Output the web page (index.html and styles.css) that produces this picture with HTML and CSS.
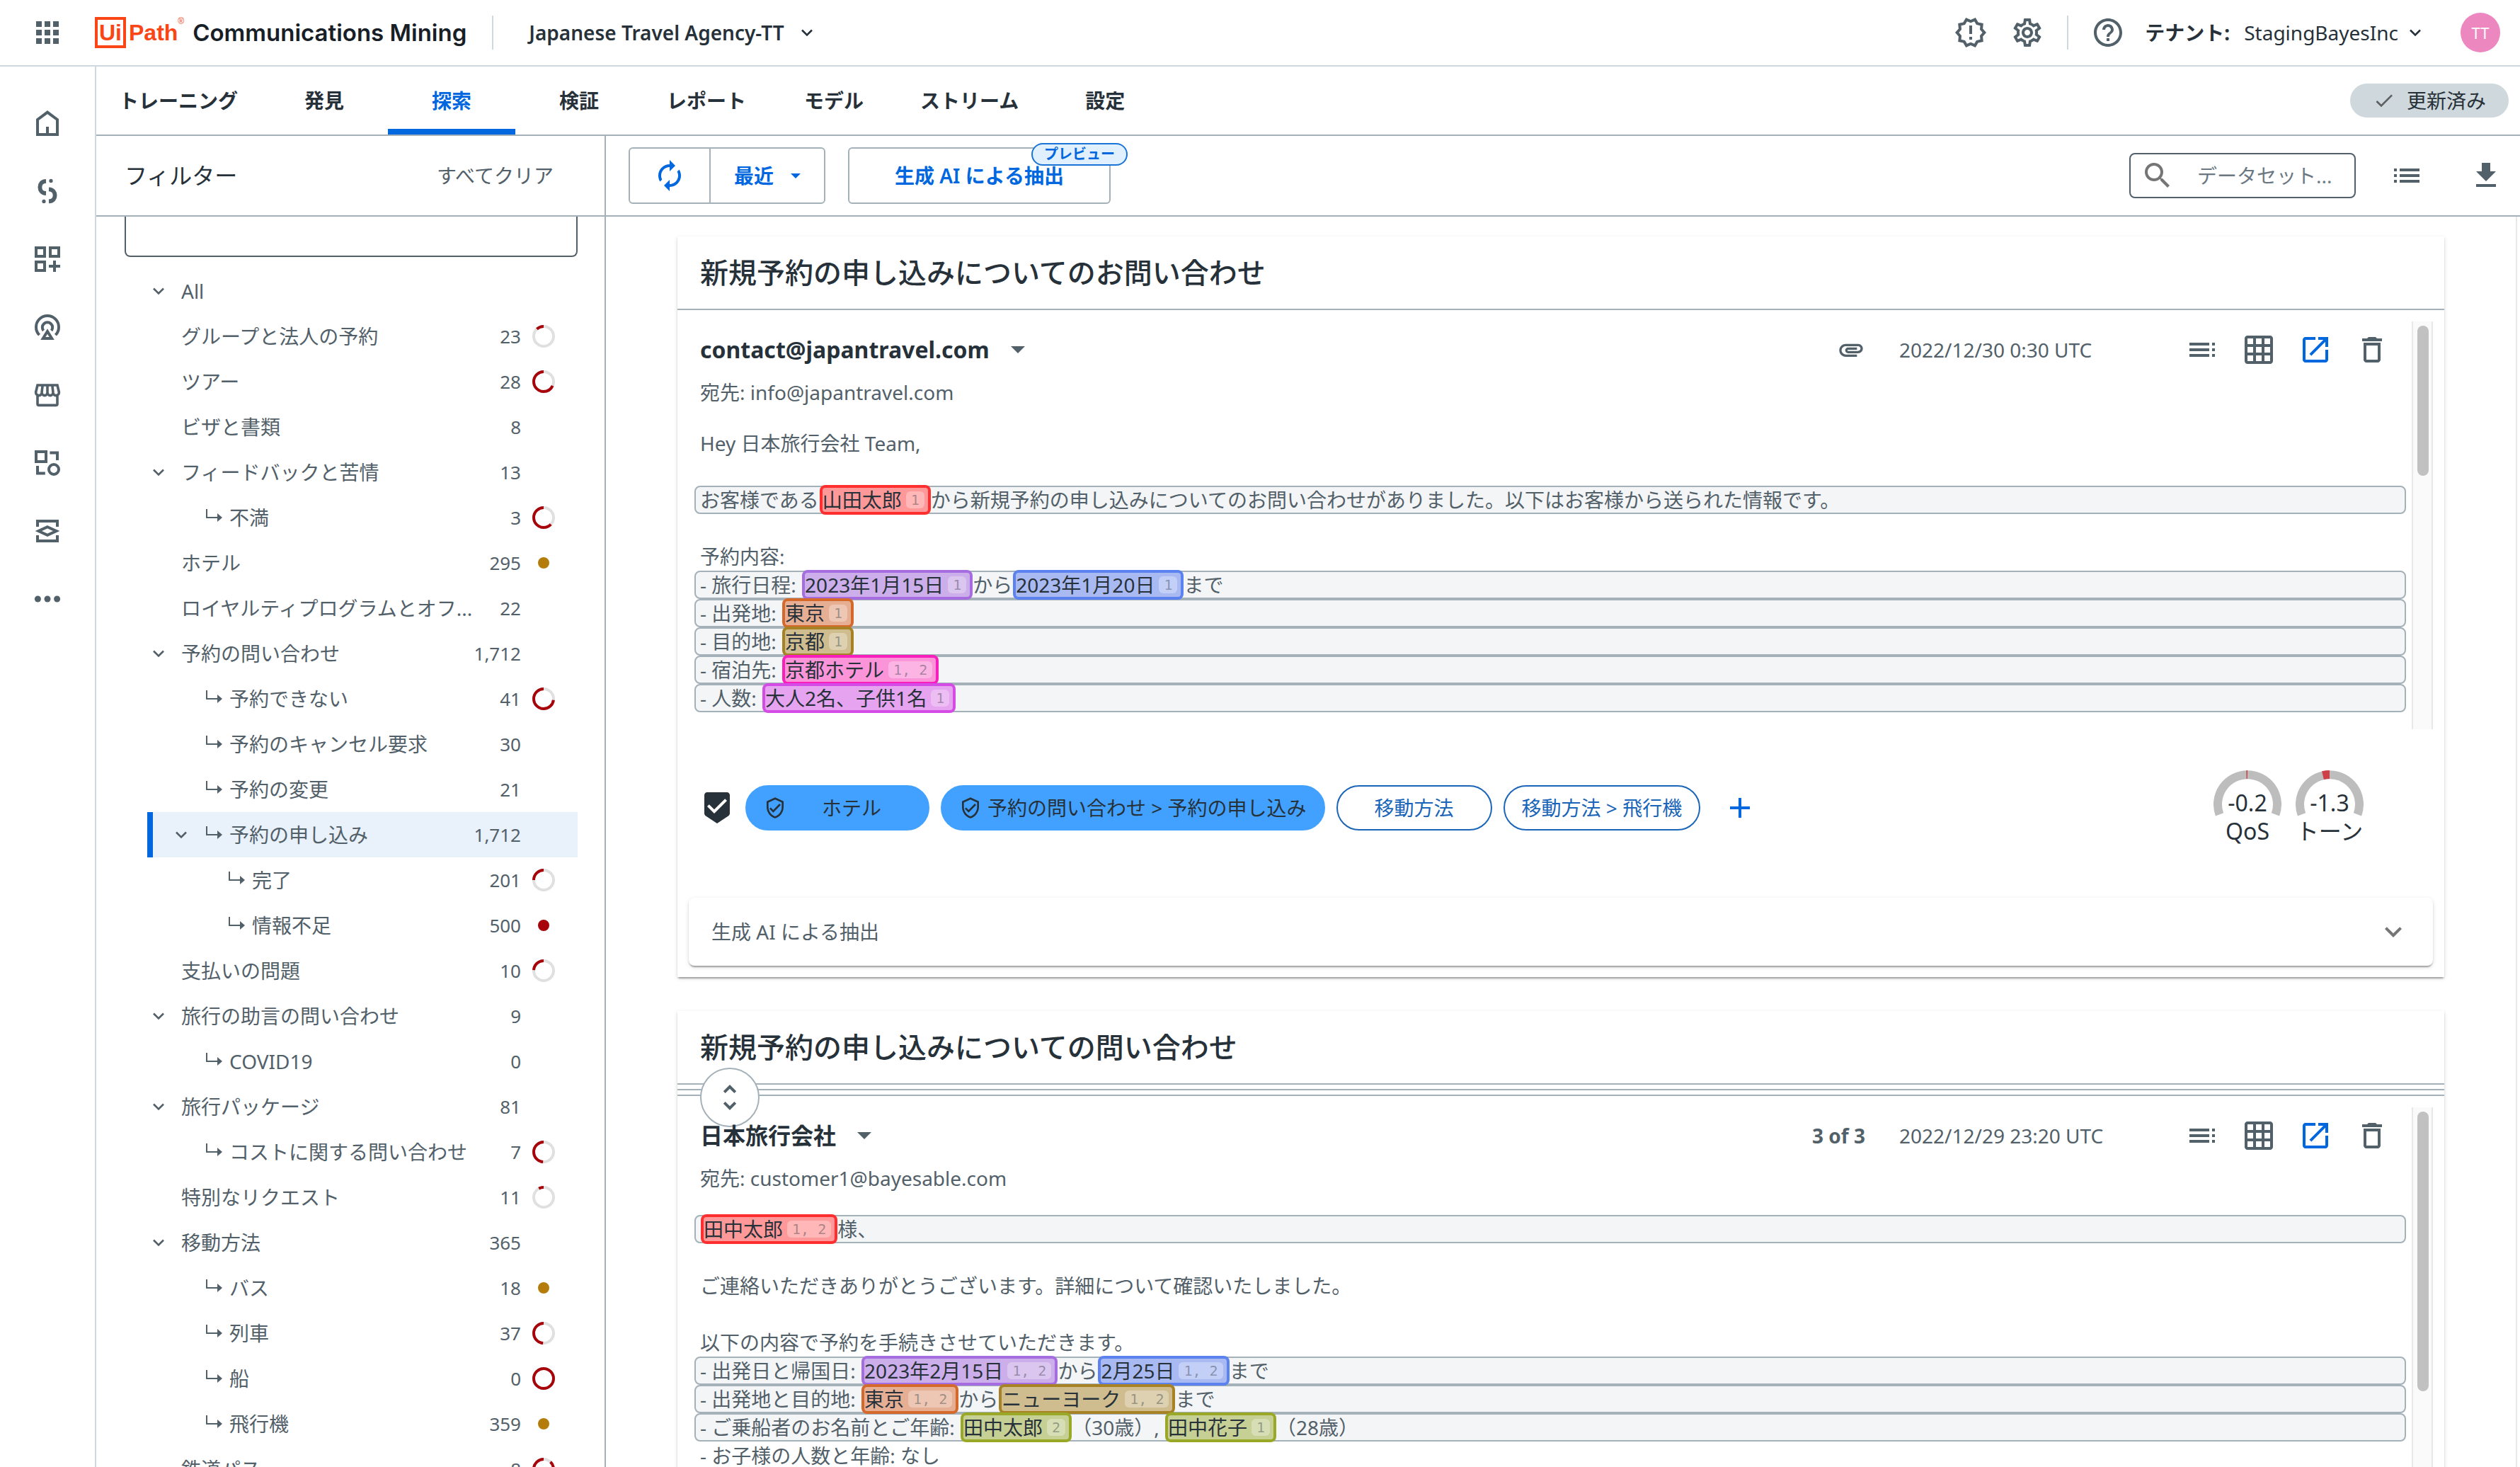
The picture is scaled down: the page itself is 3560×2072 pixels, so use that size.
FILE: index.html
```html
<!DOCTYPE html>
<html lang="ja">
<head>
<meta charset="utf-8">
<title>UiPath Communications Mining</title>
<link rel="stylesheet" href="styles.css">
</head>
<body>
<svg class="sprite" aria-hidden="true">
  <symbol id="i-chevron" viewBox="0 0 24 24"><path d="M6 9l6 6 6-6" fill="none" stroke="currentColor" stroke-width="2.200"/></symbol>
  <symbol id="i-caret" viewBox="0 0 20 10"><path d="M0 0h20L10 10z"/></symbol>
  <symbol id="i-sub" viewBox="0 0 28 28"><path d="M4 2v12h17" fill="none" stroke="currentColor" stroke-width="2"/><path d="M19 8l7 6-7 6z"/></symbol>
  <symbol id="i-toc" viewBox="0 0 24 24"><path d="M3 9h14V7H3v2zm0 4h14v-2H3v2zm0 4h14v-2H3v2zm16 0h2v-2h-2v2zm0-10v2h2V7h-2zm0 6h2v-2h-2v2z"/></symbol>
  <symbol id="i-grid" viewBox="0 0 24 24"><path d="M20 2H4c-1.100 0-2 .9-2 2v16c0 1.100.9 2 2 2h16c1.100 0 2-.9 2-2V4c0-1.100-.9-2-2-2zM8 20H4v-4h4v4zm0-6H4v-4h4v4zm0-6H4V4h4v4zm6 12h-4v-4h4v4zm0-6h-4v-4h4v4zm0-6h-4V4h4v4zm6 12h-4v-4h4v4zm0-6h-4v-4h4v4zm0-6h-4V4h4v4z"/></symbol>
  <symbol id="i-open" viewBox="0 0 24 24"><path d="M19 19H5V5h7V3H5c-1.110 0-2 .9-2 2v14c0 1.100.89 2 2 2h14c1.100 0 2-.9 2-2v-7h-2v7zM14 3v2h3.590l-9.830 9.830 1.410 1.410L19 6.410V10h2V3h-7z"/></symbol>
  <symbol id="i-trash" viewBox="0 0 24 24"><path d="M6 19c0 1.100.9 2 2 2h8c1.100 0 2-.9 2-2V7H6v12zM8 9h8v10H8V9zm7.500-5l-1-1h-5l-1 1H5v2h14V4h-3.500z"/></symbol>
  <symbol id="i-shield" viewBox="0 0 24 24"><path d="M12 1L3 5v6c0 5.550 3.840 10.740 9 12 5.160-1.260 9-6.450 9-12V5l-9-4zm7 10c0 4.520-2.980 8.690-7 9.930-4.020-1.240-7-5.410-7-9.930V6.300l7-3.110 7 3.110V11zm-11.590.590L6 13l4 4 8-8-1.410-1.420L10 14.170z"/></symbol>
</svg>

<header class="topbar">
  <button class="icon-btn apps" aria-label="アプリ"><svg class="icon" viewBox="0 0 24 24"><path d="M4 8h4V4H4v4zm6 12h4v-4h-4v4zm-6 0h4v-4H4v4zm0-6h4v-4H4v4zm6 0h4v-4h-4v4zm6-10v4h4V4h-4zm-6 4h4V4h-4v4zm6 6h4v-4h-4v4zm0 6h4v-4h-4v4z"/></svg></button>
  <a class="brand" href="#"><span class="logo"><span class="logo-box">Ui</span><span class="logo-path">Path</span><sup class="logo-mark">®</sup></span><span class="product">Communications Mining</span></a>
  <span class="rule"></span>
  <button class="project">Japanese Travel Agency-TT <svg class="chev"><use href="#i-chevron"/></svg></button>
  <div class="top-actions">
    <button class="icon-btn" aria-label="お知らせ"><svg class="icon" viewBox="0 0 24 24"><path d="M23 12l-2.440-2.780.34-3.680-3.610-.82-1.890-3.180L12 3 8.600 1.540 6.710 4.720l-3.610.81.34 3.680L1 12l2.440 2.780-.34 3.690 3.610.82 1.890 3.180L12 21l3.400 1.460 1.890-3.180 3.610-.82-.34-3.680L23 12zm-4.510 2.110l.26 2.790-2.740.62-1.430 2.410L12 18.820l-2.580 1.110-1.430-2.410-2.740-.62.26-2.800L3.660 12l1.850-2.120-.26-2.780 2.740-.61 1.430-2.410L12 5.180l2.580-1.110 1.430 2.410 2.740.62-.26 2.790L20.340 12l-1.850 2.110zM11 15h2v2h-2zm0-8h2v6h-2z"/></svg></button>
    <button class="icon-btn" aria-label="設定"><svg class="icon" viewBox="0 0 24 24"><path d="M19.430 12.980c.04-.32.07-.64.07-.98 0-.34-.03-.66-.07-.98l2.110-1.650c.19-.15.24-.42.12-.64l-2-3.460c-.09-.16-.26-.25-.44-.25-.06 0-.12.01-.17.03l-2.490 1c-.52-.4-1.080-.73-1.690-.98l-.38-2.650C14.460 2.180 14.250 2 14 2h-4c-.25 0-.46.18-.49.42l-.38 2.650c-.61.25-1.170.59-1.690.98l-2.490-1c-.06-.02-.12-.03-.18-.03-.17 0-.34.09-.43.25l-2 3.460c-.13.22-.07.49.12.64l2.110 1.650c-.04.32-.07.65-.07.98 0 .33.03.66.07.98l-2.110 1.650c-.19.15-.24.42-.12.64l2 3.460c.09.16.26.25.44.25.06 0 .12-.01.17-.03l2.490-1c.52.4 1.080.73 1.690.98l.38 2.650c.03.24.24.42.49.42h4c.25 0 .46-.18.49-.42l.38-2.650c.61-.25 1.170-.59 1.690-.98l2.490 1c.06.02.12.03.18.03.17 0 .34-.09.43-.25l2-3.460c.12-.22.07-.49-.12-.64l-2.110-1.650zm-1.980-1.710c.04.31.05.52.05.73 0 .21-.02.43-.05.73l-.14 1.130.89.7 1.080.84-.7 1.210-1.270-.51-1.040-.42-.9.680c-.43.32-.84.56-1.250.73l-1.060.43-.16 1.130-.2 1.350h-1.400l-.19-1.350-.16-1.130-1.060-.43c-.43-.18-.83-.41-1.230-.71l-.91-.7-1.060.43-1.270.51-.7-1.210 1.080-.84.89-.7-.14-1.130c-.03-.31-.05-.54-.05-.74s.02-.43.05-.73l.14-1.130-.89-.7-1.080-.84.7-1.210 1.270.51 1.040.42.9-.68c.43-.32.84-.56 1.250-.73l1.060-.43.16-1.130.2-1.350h1.390l.19 1.350.16 1.130 1.060.43c.43.18.83.41 1.230.71l.91.7 1.060-.43 1.270-.51.7 1.210-1.070.85-.89.7.14 1.130zM12 8c-2.210 0-4 1.790-4 4s1.790 4 4 4 4-1.790 4-4-1.790-4-4-4zm0 6c-1.100 0-2-.9-2-2s.9-2 2-2 2 .9 2 2-.9 2-2 2z"/></svg></button>
    <span class="rule"></span>
    <button class="icon-btn" aria-label="ヘルプ"><svg class="icon" viewBox="0 0 24 24"><path d="M11 18h2v-2h-2v2zm1-16C6.480 2 2 6.480 2 12s4.480 10 10 10 10-4.480 10-10S17.520 2 12 2zm0 18c-4.410 0-8-3.590-8-8s3.590-8 8-8 8 3.590 8 8-3.590 8-8 8zm0-14c-2.210 0-4 1.790-4 4h2c0-1.100.9-2 2-2s2 .9 2 2c0 2-3 1.750-3 5h2c0-2.250 3-2.500 3-5 0-2.210-1.790-4-4-4z"/></svg></button>
    <button class="tenant"><b>テナント:</b><span>StagingBayesInc</span><svg class="chev"><use href="#i-chevron"/></svg></button>
    <button class="avatar">TT</button>
  </div>
</header>

<div class="shell">
  <nav class="rail" aria-label="メイン">
    <a href="#" aria-label="ホーム"><svg class="icon line" viewBox="0 0 24 24"><path d="M5 9.500V20h14V9.500L12 4.300z M12 14.500V20"/></svg></a>
    <a href="#" aria-label="フロー"><svg class="icon line" viewBox="0 0 24 24"><path stroke-width="2.900" d="M11 4.900C8 5 6.700 7 6.700 9.200S8 13.400 11 13.500M13 10.700c3 .1 4.300 2.200 4.300 4.300S16 19.100 13 19.200"/><circle class="dot" cx="14.500" cy="4.700" r="1.300"/><circle class="dot" cx="9.500" cy="19.200" r="1.300"/></svg></a>
    <a href="#" aria-label="アプリ追加"><svg class="icon line" viewBox="0 0 24 24"><path d="M4 4h6v6H4zM14 4h6v6h-6zM4 14h6v6H4zM17 13v8M13 17h8"/></svg></a>
    <a href="#" aria-label="発信"><svg class="icon line" viewBox="0 0 24 24"><path d="M6.300 17.600A8 8 0 1 1 17.700 17.600M9.200 14.500A3.600 3.600 0 1 1 14.800 14.500M12 15l-3.100 5h6.200z"/></svg></a>
    <a href="#" aria-label="マーケットプレース"><svg class="icon line" viewBox="0 0 24 24"><path stroke-width="1.800" d="M5 5h14l1.200 5c0 1.400-1 2.300-2.200 2.300s-2-1-2-2.200c0 1.200-1 2.200-2 2.200s-2-1-2-2.200c0 1.200-1 2.200-2 2.200s-2-1-2-2.200c0 1.200-.8 2.200-2 2.200s-2.200-.9-2.200-2.300zM8.600 5L8 10.100M12 5v5.100M15.400 5l.6 5.100M5 12.300v5.900a1 1 0 0 0 1 1h12a1 1 0 0 0 1-1v-5.900"/></svg></a>
    <a href="#" aria-label="コンポーネント"><svg class="icon line" viewBox="0 0 24 24"><path d="M4 4h7v7H4zM13.700 4.800H19V10M5 14v5.200h5.400"/><circle cx="16.500" cy="16.500" r="3.500"/></svg></a>
    <a href="#" aria-label="モニタリング"><svg class="icon line" viewBox="0 0 24 24"><path d="M5 9V5h14v4M5 15v4h14v-4M12 9.100l6.300 2.900-6.300 2.900L5.700 12z"/></svg></a>
    <a href="#" aria-label="その他"><svg class="icon" viewBox="0 0 24 24"><circle cx="5.200" cy="12" r="2.250"/><circle cx="12" cy="12" r="2.250"/><circle cx="18.800" cy="12" r="2.250"/></svg></a>
  </nav>

  <div class="workspace">
    <div class="tabbar">
      <nav class="tabs" aria-label="データセット">
        <a href="#">トレーニング</a><a href="#">発見</a><a href="#" class="active" aria-current="page">探索</a><a href="#">検証</a><a href="#">レポート</a><a href="#">モデル</a><a href="#">ストリーム</a><a href="#">設定</a>
      </nav>
      <span class="status"><svg class="icon-sm" viewBox="0 0 24 24"><path d="M9 16.170L4.830 12l-1.420 1.410L9 19 21 7l-1.410-1.410z"/></svg>更新済み</span>
    </div>

    <div class="panes">
      <aside class="filters">
        <div class="filters-head"><h2>フィルター</h2><button>すべてクリア</button></div>
        <div class="filters-body">
          <input class="filter-input" type="text" aria-label="ラベルを検索">
          <ul class="tree">
            <li><button class="toggle" aria-label="折りたたむ"><svg class="chev"><use href="#i-chevron"/></svg></button><span class="name">All</span></li>
            <li class="leaf"><span class="name">グループと法人の予約</span><span class="count">23</span><svg class="ring" viewBox="0 0 32 32"><circle cx="16" cy="16" r="14"/><circle class="arc" pathLength="100" stroke-dasharray="12 88" cx="16" cy="16" r="14"/></svg></li>
            <li class="leaf"><span class="name">ツアー</span><span class="count">28</span><svg class="ring" viewBox="0 0 32 32"><circle cx="16" cy="16" r="14"/><circle class="arc" pathLength="100" stroke-dasharray="68 32" cx="16" cy="16" r="14"/></svg></li>
            <li class="leaf"><span class="name">ビザと書類</span><span class="count">8</span><span class="ring"></span></li>
            <li><button class="toggle" aria-label="折りたたむ"><svg class="chev"><use href="#i-chevron"/></svg></button><span class="name">フィードバックと苦情</span><span class="count">13</span><span class="ring"></span></li>
            <li class="leaf l1"><svg class="sub"><use href="#i-sub"/></svg><span class="name">不満</span><span class="count">3</span><svg class="ring" viewBox="0 0 32 32"><circle cx="16" cy="16" r="14"/><circle class="arc" pathLength="100" stroke-dasharray="63 37" cx="16" cy="16" r="14"/></svg></li>
            <li class="leaf"><span class="name">ホテル</span><span class="count">295</span><span class="ring"><i class="pip amber"></i></span></li>
            <li class="leaf"><span class="name">ロイヤルティプログラムとオフ...</span><span class="count">22</span><span class="ring"></span></li>
            <li><button class="toggle" aria-label="折りたたむ"><svg class="chev"><use href="#i-chevron"/></svg></button><span class="name">予約の問い合わせ</span><span class="count">1,712</span><span class="ring"></span></li>
            <li class="leaf l1"><svg class="sub"><use href="#i-sub"/></svg><span class="name">予約できない</span><span class="count">41</span><svg class="ring" viewBox="0 0 32 32"><circle cx="16" cy="16" r="14"/><circle class="arc" pathLength="100" stroke-dasharray="73 27" cx="16" cy="16" r="14"/></svg></li>
            <li class="leaf l1"><svg class="sub"><use href="#i-sub"/></svg><span class="name">予約のキャンセル要求</span><span class="count">30</span><span class="ring"></span></li>
            <li class="leaf l1"><svg class="sub"><use href="#i-sub"/></svg><span class="name">予約の変更</span><span class="count">21</span><span class="ring"></span></li>
            <li class="l1 selected"><button class="toggle" aria-label="折りたたむ"><svg class="chev"><use href="#i-chevron"/></svg></button><svg class="sub"><use href="#i-sub"/></svg><span class="name">予約の申し込み</span><span class="count">1,712</span><span class="ring"></span></li>
            <li class="leaf l2"><svg class="sub"><use href="#i-sub"/></svg><span class="name">完了</span><span class="count">201</span><svg class="ring" viewBox="0 0 32 32"><circle cx="16" cy="16" r="14"/><circle class="arc" pathLength="100" stroke-dasharray="25 75" cx="16" cy="16" r="14"/></svg></li>
            <li class="leaf l2"><svg class="sub"><use href="#i-sub"/></svg><span class="name">情報不足</span><span class="count">500</span><span class="ring"><i class="pip red"></i></span></li>
            <li class="leaf"><span class="name">支払いの問題</span><span class="count">10</span><svg class="ring" viewBox="0 0 32 32"><circle cx="16" cy="16" r="14"/><circle class="arc" pathLength="100" stroke-dasharray="24 76" cx="16" cy="16" r="14"/></svg></li>
            <li><button class="toggle" aria-label="折りたたむ"><svg class="chev"><use href="#i-chevron"/></svg></button><span class="name">旅行の助言の問い合わせ</span><span class="count">9</span><span class="ring"></span></li>
            <li class="leaf l1"><svg class="sub"><use href="#i-sub"/></svg><span class="name">COVID19</span><span class="count">0</span><span class="ring"></span></li>
            <li><button class="toggle" aria-label="折りたたむ"><svg class="chev"><use href="#i-chevron"/></svg></button><span class="name">旅行パッケージ</span><span class="count">81</span><span class="ring"></span></li>
            <li class="leaf l1"><svg class="sub"><use href="#i-sub"/></svg><span class="name">コストに関する問い合わせ</span><span class="count">7</span><svg class="ring" viewBox="0 0 32 32"><circle cx="16" cy="16" r="14"/><circle class="arc" pathLength="100" stroke-dasharray="49 51" cx="16" cy="16" r="14"/></svg></li>
            <li class="leaf"><span class="name">特別なリクエスト</span><span class="count">11</span><svg class="ring" viewBox="0 0 32 32"><circle cx="16" cy="16" r="14"/><circle class="arc" pathLength="100" stroke-dasharray="8 92" cx="16" cy="16" r="14"/></svg></li>
            <li><button class="toggle" aria-label="折りたたむ"><svg class="chev"><use href="#i-chevron"/></svg></button><span class="name">移動方法</span><span class="count">365</span><span class="ring"></span></li>
            <li class="leaf l1"><svg class="sub"><use href="#i-sub"/></svg><span class="name">バス</span><span class="count">18</span><span class="ring"><i class="pip amber"></i></span></li>
            <li class="leaf l1"><svg class="sub"><use href="#i-sub"/></svg><span class="name">列車</span><span class="count">37</span><svg class="ring" viewBox="0 0 32 32"><circle cx="16" cy="16" r="14"/><circle class="arc" pathLength="100" stroke-dasharray="49 51" cx="16" cy="16" r="14"/></svg></li>
            <li class="leaf l1"><svg class="sub"><use href="#i-sub"/></svg><span class="name">船</span><span class="count">0</span><svg class="ring" viewBox="0 0 32 32"><circle cx="16" cy="16" r="14"/><circle class="arc" cx="16" cy="16" r="14"/></svg></li>
            <li class="leaf l1"><svg class="sub"><use href="#i-sub"/></svg><span class="name">飛行機</span><span class="count">359</span><span class="ring"><i class="pip amber"></i></span></li>
            <li class="leaf"><span class="name">鉄道パス</span><span class="count">8</span><svg class="ring" viewBox="0 0 32 32"><circle cx="16" cy="16" r="14"/><circle class="arc" pathLength="100" stroke-dasharray="88 12" cx="16" cy="16" r="14"/></svg></li>
          </ul>
        </div>
      </aside>

      <main class="content">
        <div class="toolbar">
          <div class="btn-group">
            <button class="refresh" aria-label="更新"><svg class="icon" viewBox="0 0 24 24"><path d="M12 6v3l4-4-4-4v3c-4.420 0-8 3.580-8 8 0 1.570.46 3.030 1.240 4.260L6.700 14.800c-.45-.83-.7-1.790-.7-2.800 0-3.310 2.690-6 6-6zm6.760 1.740L17.300 9.200c.44.84.7 1.790.7 2.800 0 3.310-2.690 6-6 6v-3l-4 4 4 4v-3c4.420 0 8-3.580 8-8 0-1.570-.46-3.030-1.240-4.260z"/></svg></button>
            <button class="recent">最近<svg class="caret-sm"><use href="#i-caret"/></svg></button>
          </div>
          <button class="gen-btn">生成 AI による抽出<span class="preview">プレビュー</span></button>
          <label class="search"><svg class="icon" viewBox="0 0 24 24"><path d="M15.500 14h-.79l-.28-.27C15.410 12.590 16 11.110 16 9.500 16 5.910 13.090 3 9.500 3S3 5.910 3 9.500 5.910 16 9.500 16c1.610 0 3.090-.59 4.230-1.570l.27.28v.79l5 4.990L20.490 19l-4.990-5zm-6 0C7.010 14 5 11.990 5 9.500S7.010 5 9.500 5 14 7.010 14 9.500 11.990 14 9.500 14z"/></svg><input type="text" placeholder="データセット..." aria-label="データセットを検索"></label>
          <button class="icon-btn tool" aria-label="一覧"><svg class="icon" viewBox="0 0 24 24"><path d="M3 13h2v-2H3v2zm0 4h2v-2H3v2zm0-8h2V7H3v2zm4 4h14v-2H7v2zm0 4h14v-2H7v2zM7 7v2h14V7H7z"/></svg></button>
          <button class="icon-btn tool" aria-label="ダウンロード"><svg class="icon" viewBox="0 0 24 24"><path d="M19 9h-4V3H9v6H5l7 7 7-7zM5 18v2h14v-2H5z"/></svg></button>
        </div>

        <div class="feed">
          <article class="card">
            <h3>新規予約の申し込みについてのお問い合わせ</h3>
            <div class="divider"></div>
            <div class="message first">
              <div class="message-main">
                <div class="message-head">
                  <button class="sender">contact@japantravel.com<svg class="caret"><use href="#i-caret"/></svg></button>
                  <svg class="clip" viewBox="0 0 24 24"><path d="M2 12.500C2 9.460 4.460 7 7.500 7H18c2.210 0 4 1.790 4 4s-1.790 4-4 4H9.500C8.120 15 7 13.880 7 12.500S8.120 10 9.500 10H17v2H9.410c-.55 0-.55 1 0 1H18c1.100 0 2-.9 2-2s-.9-2-2-2H7.500C5.570 9 4 10.570 4 12.500S5.570 16 7.500 16H17v2H7.500C4.460 18 2 15.540 2 12.500z"/></svg>
                  <time>2022/12/30 0:30 UTC</time>
                  <div class="actions">
                    <button class="icon-btn" aria-label="スレッド"><svg class="icon"><use href="#i-toc"/></svg></button>
                    <button class="icon-btn" aria-label="表"><svg class="icon"><use href="#i-grid"/></svg></button>
                    <button class="icon-btn blue" aria-label="開く"><svg class="icon"><use href="#i-open"/></svg></button>
                    <button class="icon-btn" aria-label="削除"><svg class="icon"><use href="#i-trash"/></svg></button>
                  </div>
                </div>
                <p class="to">宛先: info@japantravel.com</p>
                <div class="body">
                  <p>Hey 日本旅行会社 Team,</p>
                  <p></p>
                  <p class="hit">お客様である<mark class="red">山田太郎<small>1</small></mark>から新規予約の申し込みについてのお問い合わせがありました。以下はお客様から送られた情報です。</p>
                  <p></p>
                  <p>予約内容:</p>
                  <p class="hit">- 旅行日程: <mark class="purple">2023年1月15日<small>1</small></mark>から<mark class="azure">2023年1月20日<small>1</small></mark>まで</p>
                  <p class="hit">- 出発地: <mark class="orange">東京<small>1</small></mark></p>
                  <p class="hit">- 目的地: <mark class="gold">京都<small>1</small></mark></p>
                  <p class="hit">- 宿泊先: <mark class="pink">京都ホテル<small>1, 2</small></mark></p>
                  <p class="hit">- 人数: <mark class="violet">大人2名、子供1名<small>1</small></mark></p>
                </div>
              </div>
              <div class="track"><div class="thumb"></div></div>
            </div>
            <div class="labels">
              <svg class="icon reviewed" viewBox="0 0 24 24"><path d="M19 1H5c-1.100 0-1.990.9-1.990 2L3 15.930c0 .69.35 1.300.88 1.660L12 23l8.110-5.410c.53-.36.88-.97.88-1.660L21 3c0-1.100-.9-2-2-2zm-9 15l-5-5 1.410-1.410L10 13.170l7.590-7.590L19 7l-9 9z"/></svg>
              <button class="pill solid"><svg class="icon-sm"><use href="#i-shield"/></svg><span>ホテル</span></button>
              <button class="pill solid"><svg class="icon-sm"><use href="#i-shield"/></svg><span>予約の問い合わせ &gt; 予約の申し込み</span></button>
              <button class="pill"><span>移動方法</span></button>
              <button class="pill"><span>移動方法 &gt; 飛行機</span></button>
              <button class="icon-btn blue add" aria-label="ラベルを追加"><svg class="icon" viewBox="0 0 24 24"><path d="M19 13h-6v6h-2v-6H5v-2h6V5h2v6h6v2z"/></svg></button>
              <div class="gauges">
                <div class="gauge"><div class="dial"><svg viewBox="0 0 96 66"><path class="g-bg" d="M8.500 62.400A42 42 0 1 1 87.500 62.400"/><path class="g-val" d="M48 6A42 42 0 0 0 46.500 6"/></svg><span>-0.2</span></div><span>QoS</span></div>
                <div class="gauge"><div class="dial"><svg viewBox="0 0 96 66"><path class="g-bg" d="M8.500 62.400A42 42 0 1 1 87.500 62.400"/><path class="g-val" d="M48 6A42 42 0 0 0 38.500 7.100"/></svg><span>-1.3</span></div><span>トーン</span></div>
              </div>
            </div>
            <button class="accordion">生成 AI による抽出<svg class="icon" viewBox="0 0 24 24"><path d="M16.590 8.590L12 13.170 7.410 8.590 6 10l6 6 6-6z"/></svg></button>
          </article>

          <article class="card">
            <h3>新規予約の申し込みについての問い合わせ</h3>
            <div class="divider triple"><button class="expand" aria-label="スレッドを展開"><svg class="icon" viewBox="0 0 24 24"><path d="M12 5.830L15.170 9l1.410-1.410L12 3 7.410 7.590 8.830 9 12 5.830zm0 12.340L8.830 15l-1.410 1.410L12 21l4.590-4.590L15.170 15 12 18.170z"/></svg></button></div>
            <div class="message second">
              <div class="message-main">
                <div class="message-head">
                  <button class="sender">日本旅行会社<svg class="caret"><use href="#i-caret"/></svg></button>
                  <b class="position">3 of 3</b>
                  <time>2022/12/29 23:20 UTC</time>
                  <div class="actions">
                    <button class="icon-btn" aria-label="スレッド"><svg class="icon"><use href="#i-toc"/></svg></button>
                    <button class="icon-btn" aria-label="表"><svg class="icon"><use href="#i-grid"/></svg></button>
                    <button class="icon-btn blue" aria-label="開く"><svg class="icon"><use href="#i-open"/></svg></button>
                    <button class="icon-btn" aria-label="削除"><svg class="icon"><use href="#i-trash"/></svg></button>
                  </div>
                </div>
                <p class="to">宛先: customer1@bayesable.com</p>
                <div class="body">
                  <p class="hit"><mark class="red">田中太郎<small>1, 2</small></mark>様、</p>
                  <p></p>
                  <p>ご連絡いただきありがとうございます。詳細について確認いたしました。</p>
                  <p></p>
                  <p>以下の内容で予約を手続きさせていただきます。</p>
                  <p class="hit">- 出発日と帰国日: <mark class="purple">2023年2月15日<small>1, 2</small></mark>から<mark class="azure">2月25日<small>1, 2</small></mark>まで</p>
                  <p class="hit">- 出発地と目的地: <mark class="orange">東京<small>1, 2</small></mark>から<mark class="gold">ニューヨーク<small>1, 2</small></mark>まで</p>
                  <p class="hit">- ご乗船者のお名前とご年齢: <mark class="olive">田中太郎<small>2</small></mark>（30歳）, <mark class="olive">田中花子<small>1</small></mark>（28歳）</p>
                  <p>- お子様の人数と年齢: なし</p>
                </div>
              </div>
              <div class="track"><div class="thumb"></div></div>
            </div>
          </article>
        </div>
      </main>
    </div>
  </div>
</div>
</body>
</html>
```
FILE: styles.css
```css
:root {
  --text: #526069;
  --ink: #273139;
  --line: #a4b1b8;
  --line-soft: #cfd8dd;
  --blue: #0067df;
}

* { box-sizing: border-box; }

body {
  margin: 0;
  height: 100vh;
  display: flex;
  flex-direction: column;
  overflow: hidden;
  background: #fff;
  color: var(--text);
  font-family: "Noto Sans", "Noto Sans CJK JP", sans-serif;
  font-size: 28px;
  line-height: 40px;
}

button, input { font: inherit; color: inherit; }
button { border: 0; background: none; padding: 0; white-space: nowrap; }
a { color: inherit; text-decoration: none; }
h2, h3, p, ul { margin: 0; padding: 0; }
ul { list-style: none; }
svg { fill: currentColor; flex: none; display: block; }

.sprite { position: absolute; width: 0; height: 0; }
.icon { width: 48px; height: 48px; }
.icon-sm { width: 32px; height: 32px; }
.icon-btn { display: flex; flex: none; color: var(--text); }
.icon-btn.blue { color: var(--blue); }
.line { fill: none; stroke: currentColor; stroke-width: 2; }
.line .dot { fill: currentColor; stroke: none; }
.chev { width: 28px; height: 28px; }
.caret { width: 20px; height: 10px; color: var(--text); }
.caret-sm { width: 14px; height: 7px; }
.rule { width: 2px; height: 48px; background: var(--line-soft); }

/* Top bar */
.topbar {
  flex: none;
  height: 94px;
  display: flex;
  align-items: center;
  padding: 0 28px 0 43px;
  border-bottom: 2px solid var(--line-soft);
  color: var(--ink);
}
.brand { display: flex; align-items: center; gap: 12px; margin: 0 36px 0 43px; }
.logo { display: flex; align-items: center; color: #fa4616; font-family: "Liberation Sans", sans-serif; font-size: 32px; }
.logo-box {
  width: 44px;
  height: 44px;
  border: 4px solid #fa4616;
  line-height: 36px;
  text-align: center;
  font-weight: 700;
}
.logo-path { margin-left: 4px; font-weight: 700; }
.logo-mark { font-size: 12px; line-height: 12px; align-self: flex-start; }
.product { font-family: Inter, sans-serif; font-size: 33px; font-weight: 600; color: #182027; }
.project { display: flex; align-items: center; gap: 18px; margin-left: 50px; font-weight: 600; }
.top-actions { margin-left: auto; display: flex; align-items: center; gap: 32px; }
.tenant { display: flex; align-items: center; gap: 10px; margin-left: -4px; }
.tenant span { margin-left: 10px; }
.avatar {
  width: 56px;
  height: 56px;
  margin-left: 18px;
  border-radius: 50%;
  background: #ed87bf;
  color: #fff;
  font-size: 22px;
}

/* Shell */
.shell { flex: 1; min-height: 0; display: flex; }
.rail {
  flex: none;
  width: 136px;
  padding-top: 32px;
  border-right: 2px solid var(--line-soft);
}
.rail a { display: flex; align-items: center; justify-content: center; height: 96px; }
.workspace { flex: 1; min-width: 0; display: flex; flex-direction: column; }

.tabbar {
  flex: none;
  display: flex;
  align-items: center;
  justify-content: space-between;
  height: 98px;
  padding-right: 16px;
  border-bottom: 2px solid var(--line);
}
.tabs { display: flex; align-self: stretch; color: var(--ink); font-weight: 600; }
.tabs a {
  min-width: 180px;
  padding: 8px 32px 0;
  border-bottom: 8px solid transparent;
  display: flex;
  align-items: center;
  justify-content: center;
}
.tabs .active { color: var(--blue); border-color: var(--blue); }
.status {
  display: flex;
  align-items: center;
  gap: 16px;
  height: 48px;
  padding: 0 32px;
  border-radius: 24px;
  background: var(--line-soft);
  color: var(--ink);
}
.status svg { color: #5f6062; }

.panes { flex: 1; min-height: 0; display: flex; }

/* Filters */
.filters {
  flex: none;
  width: 720px;
  display: flex;
  flex-direction: column;
  border-right: 2px solid var(--line);
}
.filters-head {
  flex: none;
  height: 114px;
  display: flex;
  align-items: center;
  justify-content: space-between;
  padding: 0 72px 0 40px;
  border-bottom: 2px solid var(--line);
}
.filters-head h2 { font-size: 32px; font-weight: 400; color: var(--ink); }
.filters-body { flex: 1; min-height: 0; overflow: hidden; padding: 0 38px 0 40px; }
.filter-input {
  display: block;
  width: 100%;
  height: 57px;
  border: 2px solid var(--text);
  border-top: 0;
  border-radius: 0 0 8px 8px;
}
.tree { margin: 16px 0 0 32px; }
.tree li { display: flex; align-items: center; height: 64px; padding-right: 32px; }
.tree .leaf { padding-left: 48px; }
.tree .l1 { padding-left: 32px; }
.tree .leaf.l1 { padding-left: 80px; }
.tree .leaf.l2 { padding-left: 112px; }
.tree .selected { background: #e9f1fa; box-shadow: inset 8px 0 0 var(--blue); }
.toggle { flex: none; width: 32px; margin-right: 16px; display: flex; justify-content: center; }
.sub { width: 28px; height: 28px; margin-right: 8px; }
.name { flex: 1; white-space: nowrap; }
.count { font-size: 26px; }
.ring { width: 32px; height: 32px; margin-left: 16px; display: flex; align-items: center; justify-content: center; }
.ring circle { fill: none; stroke: #e0e0e0; stroke-width: 4; }
.ring .arc { stroke: #a6040a; transform: rotate(-90deg) scaleY(-1); transform-origin: 16px 16px; }
.pip { width: 16px; height: 16px; border-radius: 50%; }
.amber { background: #b47d0b; }
.pip.red { background: #a6040a; }

/* Toolbar */
.content { flex: 1; min-width: 0; display: flex; flex-direction: column; }
.toolbar {
  flex: none;
  height: 114px;
  display: flex;
  align-items: center;
  padding: 0 24px 0 32px;
  border-bottom: 2px solid var(--line);
}
.btn-group { display: flex; height: 80px; border: 2px solid var(--line); border-radius: 6px; color: var(--blue); font-weight: 600; }
.refresh { width: 114px; display: flex; align-items: center; justify-content: center; border-right: 2px solid var(--line); }
.recent { display: flex; align-items: center; gap: 24px; padding: 0 33px; }
.gen-btn {
  position: relative;
  height: 80px;
  margin-left: 32px;
  padding: 0 64px;
  border: 2px solid var(--line);
  border-radius: 6px;
  color: var(--blue);
  font-weight: 600;
}
.preview {
  position: absolute;
  top: -8px;
  right: -26px;
  padding: 0 16px;
  border: 2px solid #1a74d8;
  border-radius: 16px;
  background: #e0f0ff;
  font-size: 20px;
  line-height: 28px;
}
.search {
  display: flex;
  align-items: center;
  width: 320px;
  height: 64px;
  margin-left: auto;
  margin-right: 48px;
  padding-left: 14px;
  border: 2px solid var(--text);
  border-radius: 8px;
  color: #757575;
}
.search input { flex: 1; min-width: 0; margin-left: 32px; padding: 0; border: 0; background: none; outline: 0; }
.search input::placeholder { color: #6b7882; opacity: 1; }
.tool + .tool { margin-left: 64px; }

/* Feed */
.feed {
  flex: 1;
  min-height: 0;
  overflow: hidden;
  margin-right: 4px;
  padding: 28px 101px 0;
  border-right: 2px solid #e8e8e8;
}
.card {
  margin-bottom: 48px;
  padding-bottom: 16px;
  background: #fff;
  box-shadow: 0 4px 2px -2px rgba(0, 0, 0, .2), 0 2px 2px rgba(0, 0, 0, .14), 0 2px 6px rgba(0, 0, 0, .12);
}
.card h3 { padding: 22px 32px; font-size: 40px; line-height: 58px; font-weight: 500; color: var(--ink); }
.divider { height: 2px; background: var(--line); }
.triple {
  position: relative;
  height: 18px;
  background: none;
  border-top: 2px solid var(--line);
  border-bottom: 2px solid var(--line);
  padding: 6px 0;
}
.triple::before { content: ""; display: block; height: 2px; background: var(--line); }
.expand {
  position: absolute;
  left: 32px;
  top: -24px;
  width: 84px;
  height: 84px;
  display: flex;
  align-items: center;
  justify-content: center;
  border: 2px solid var(--line);
  border-radius: 50%;
  background: #fff;
}

.message { position: relative; display: flex; margin: 16px 16px 0; padding-left: 16px; overflow: hidden; }
.first { height: 576px; }
.second { height: 800px; }
.message-main { flex: 1; min-width: 0; margin-right: 16px; }
.message-head { display: flex; align-items: center; height: 80px; }
.sender { display: flex; align-items: center; gap: 30px; margin-right: auto; color: var(--ink); font-size: 32px; font-weight: 700; }
.clip { width: 40px; height: 40px; }
.message-head time { width: 452px; padding-left: 48px; }
.actions { display: flex; gap: 32px; padding-right: 16px; }
.body { margin-top: 32px; }
.body p { height: 40px; white-space: nowrap; }
.body .hit {
  margin: 0 -8px;
  padding: 0 6px;
  border: 2px solid var(--line);
  border-radius: 8px;
  background: #f4f5f7;
  line-height: 36px;
}

mark {
  display: inline-flex;
  align-items: center;
  height: 42px;
  margin: -3px 0 -3px 1px;
  padding: 0 5px 0 0;
  vertical-align: top;
  border: 4px solid;
  border-radius: 8px;
  color: var(--ink);
}
mark small {
  margin-left: 6px;
  padding: 0 7px;
  border-radius: 6px;
  background: rgba(255, 255, 255, .3);
  color: rgba(39, 49, 57, .4);
  font-family: "DejaVu Sans Mono", monospace;
  font-size: 20px;
  line-height: 24px;
}
mark.red { background: #ff9898; border-color: #ff2f2f; }
mark.purple { background: #ccaeea; border-color: #a66de0; }
mark.azure { background: #a9baf3; border-color: #5b82ee; }
mark.orange { background: #e6af94; border-color: #d5692b; }
mark.gold { background: #cfbd90; border-color: #a68225; }
mark.pink { background: #fb94d9; border-color: #f91fbd; }
mark.violet { background: #e6a3ef; border-color: #d44be6; }
mark.olive { background: #c6cf94; border-color: #99a826; }

.track { flex: none; width: 30px; padding: 6px; border: solid #e8e8e8; border-width: 0 2px; background: #fafafa; }
.thumb { width: 16px; margin: 0 auto; height: 212px; border-radius: 8px; background: #c1c1c1; }
.second .thumb { height: 395px; }

.labels { display: flex; align-items: center; gap: 16px; padding: 58px 114px 74px 32px; color: var(--ink); }
.pill {
  display: flex;
  align-items: center;
  gap: 8px;
  min-width: 220px;
  height: 64px;
  padding: 0 24px;
  border: 2px solid #1a65b8;
  border-radius: 32px;
  color: #1a65b8;
}
.pill span { flex: 1; text-align: center; }
.solid { min-width: 260px; border-color: #42a1ff; background: #42a1ff; color: var(--ink); }
.add { margin-left: 16px; }
.gauges { display: flex; gap: 20px; margin-left: auto; font-size: 32px; text-align: center; }
.gauge { width: 96px; }
.dial { display: grid; height: 66px; }
.dial svg, .dial span { grid-area: 1 / 1; }
.dial span { align-self: end; }
.g-bg, .g-val { fill: none; stroke: #bdbdbd; stroke-width: 12; }
.g-val { stroke: #cf3f48; }
.accordion {
  display: flex;
  align-items: center;
  justify-content: space-between;
  width: calc(100% - 32px);
  height: 96px;
  margin: 0 16px;
  padding: 0 32px;
  border-radius: 8px;
  box-shadow: 0 4px 2px -2px rgba(0, 0, 0, .2), 0 2px 2px rgba(0, 0, 0, .14), 0 2px 6px rgba(0, 0, 0, .12);
}
.accordion svg { color: #757575; }
```
